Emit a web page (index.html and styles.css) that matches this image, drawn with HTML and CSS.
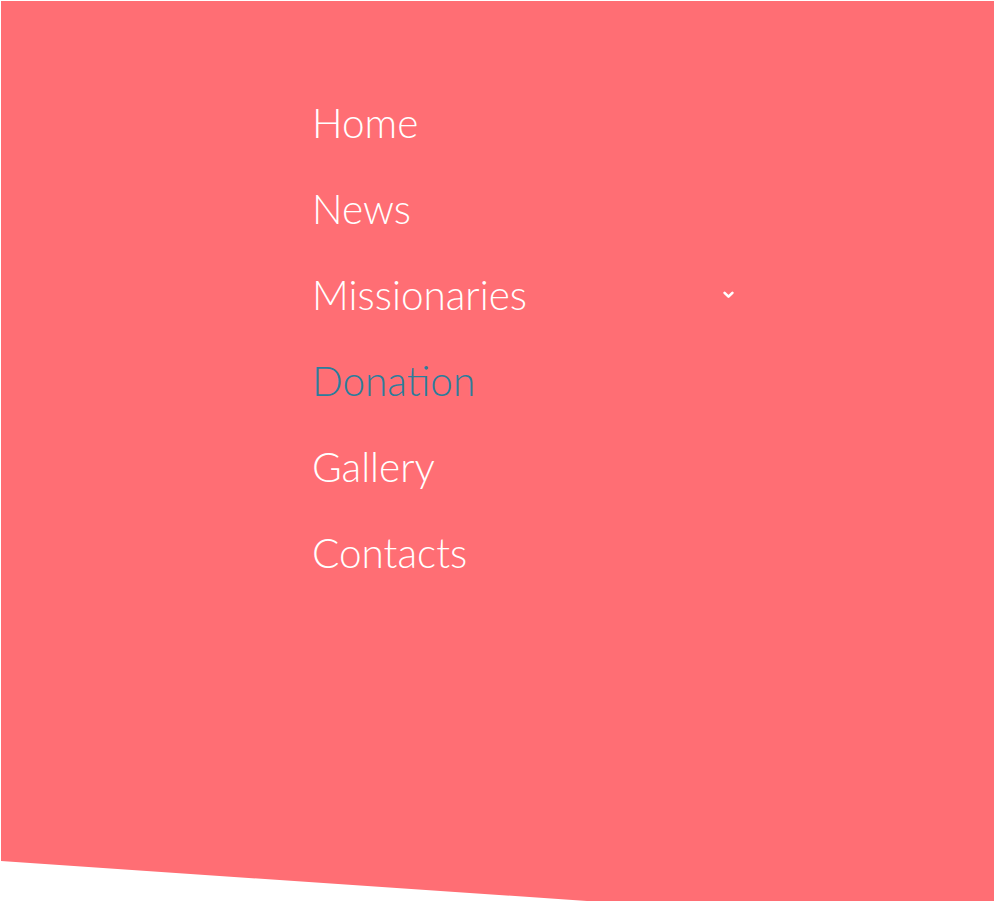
FILE: index.html
```html
<!DOCTYPE html>
<html lang="en">
<head>
<meta charset="utf-8">
<title>Menu</title>
<link rel="stylesheet" href="styles.css">
</head>
<body>
<div class="overlay">
  <nav class="menu">
    <ul class="menu-list">
      <li class="menu-item"><a href="#">Home</a></li>
      <li class="menu-item"><a href="#">News</a></li>
      <li class="menu-item has-sub"><a href="#">Missionaries</a>
        <svg class="chevron" width="11" height="8" viewBox="0 0 11 8" aria-hidden="true"><path d="M1.6 1.8 L5.5 5.7 L9.4 1.8" fill="none" stroke="#fff" stroke-width="2.6" stroke-linecap="round" stroke-linejoin="round"/></svg>
      </li>
      <li class="menu-item active"><a href="#">Donation</a></li>
      <li class="menu-item"><a href="#">Gallery</a></li>
      <li class="menu-item"><a href="#">Contacts</a></li>
    </ul>
  </nav>
</div>
</body>
</html>
```
FILE: styles.css
```css
html, body {
  margin: 0;
  padding: 0;
  overflow: hidden;
  background: #ffffff;
}
body {
  padding: 1px 0 0 1px;
  height: 901px;
  box-sizing: border-box;
}
.overlay {
  background: #ff6e74;
  height: 900px;
  clip-path: polygon(0 0, 100% 0, 100% 100%, 586px 100%, 0 860px);
  padding: 79px 0 0 311px;
  box-sizing: border-box;
}
.menu-list {
  list-style: none;
  margin: 0;
  padding: 0;
  width: 428px;
}
.menu-item {
  display: flex;
  align-items: center;
  justify-content: space-between;
  height: 86px;
  font-family: "Lato", "Liberation Sans", sans-serif;
  font-weight: 300;
  font-size: 40.5px;
  line-height: 86px;
}
.menu-item a {
  color: #ffffff;
  text-decoration: none;
}
.menu-item.active a {
  color: #2b7d9c;
}
.chevron {
  display: block;
  margin-right: 6px;
}
```
